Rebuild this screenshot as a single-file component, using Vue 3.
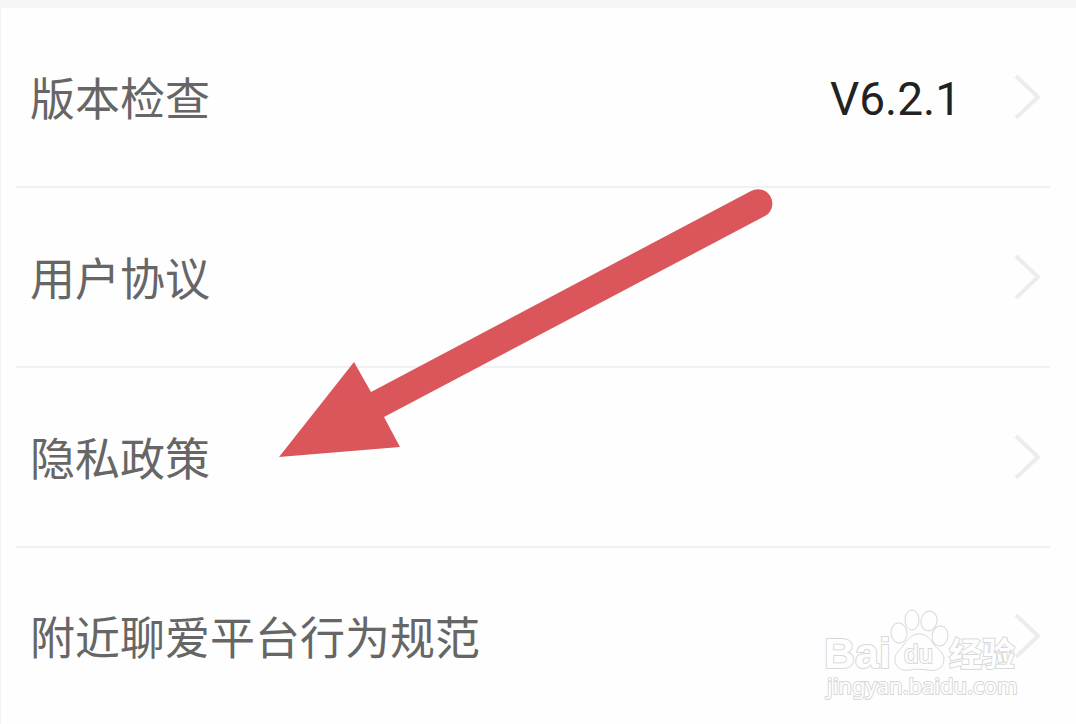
<script setup>
const rows = [
  { label: '版本检查', value: 'V6.2.1' },
  { label: '用户协议' },
  { label: '隐私政策' },
  { label: '附近聊爱平台行为规范' },
]
</script>

<template>
  <main class="page">
    <nav class="list">
      <a v-for="row in rows" :key="row.label" class="row" href="#">
        <span class="label">{{ row.label }}</span>
        <span v-if="row.value" class="value">{{ row.value }}</span>
        <svg class="chevron" viewBox="0 0 28 48" aria-hidden="true">
          <path d="M3 3 L25 24 L3 45" />
        </svg>
      </a>
    </nav>

    <svg class="arrow" viewBox="0 0 496 270" aria-hidden="true">
      <path d="M0 269 L75 174 L92 204 L472 3 A14 14 0 0 1 486 28 L105 229 L121 259 Z" />
    </svg>

    <svg class="watermark" viewBox="0 0 200 96" role="img" aria-label="Baidu 经验">
      <g class="paw">
        <ellipse cx="75" cy="24" rx="8" ry="10" transform="rotate(-8 75 24)" />
        <ellipse cx="88" cy="11" rx="7" ry="10" />
        <ellipse cx="105" cy="12" rx="8" ry="10" transform="rotate(12 105 12)" />
        <ellipse cx="116" cy="27" rx="8" ry="10" transform="rotate(8 116 27)" />
        <path d="M95 25 C87 25 83 31 79 37 C75 42 70 45 71 52 C72 60 79 62 86 61 C92 60 97 60 103 61 C112 63 120 59 120 50 C120 44 115 41 111 37 C106 30 103 25 95 25 Z" />
      </g>
      <text class="brand" x="0" y="59">Bai</text>
      <text class="du" x="80" y="54">du</text>
      <text class="cjk" x="125" y="57">经验</text>
      <text class="url" x="3" y="85">jingyan.baidu.com</text>
    </svg>
  </main>
</template>

<style>
body {
  margin: 0;
  background: #fefefe;
}
</style>

<style scoped>
.page {
  position: relative;
  box-sizing: border-box;
  min-height: 100vh;
  overflow: hidden;
  border-top: 8px solid #f5f5f5;
  background: #fefefe;
  font-family: "Noto Sans CJK SC", sans-serif;
}

.page::before {
  content: "";
  position: absolute;
  top: 0;
  bottom: 0;
  left: 0;
  width: 1px;
  background: #f2f2f2;
}

.list {
  display: flex;
  flex-direction: column;
  margin: 0 26px 0 16px;
}

.row {
  display: flex;
  align-items: center;
  box-sizing: border-box;
  height: 180px;
  padding: 0 9px 0 14px;
  border-bottom: 2px solid #f1f1f1;
  color: #666;
  text-decoration: none;
}

.row:last-child {
  height: 176px;
  border-bottom: 0;
}

.label {
  flex: 1;
  font-size: 45px;
  line-height: 60px;
}

.value {
  margin-right: 52px;
  padding-top: 4px;
  color: #222;
  font-family: Roboto, sans-serif;
  font-size: 46px;
  line-height: 60px;
}

.chevron {
  width: 28px;
  height: 48px;
  fill: none;
  stroke: #ececec;
  stroke-width: 4;
}

.arrow {
  position: absolute;
  top: 180px;
  left: 279px;
  width: 496px;
  height: 270px;
  fill: #db565b;
}

.watermark {
  position: absolute;
  right: 52px;
  bottom: 19px;
  width: 200px;
  height: 96px;
  fill: #fefefe;
  stroke: #d8d8d8;
  stroke-width: 1;
}

.watermark text {
  paint-order: stroke;
  stroke-width: 2;
}

.brand {
  font-family: "Liberation Sans", sans-serif;
  font-size: 43px;
  font-weight: 700;
}

.du {
  font-family: "Liberation Sans", sans-serif;
  font-size: 26px;
}

.cjk {
  font-family: "Noto Sans CJK SC", sans-serif;
  font-size: 33px;
  font-weight: 700;
}

.url {
  font-family: "Noto Sans", sans-serif;
  font-size: 22px;
}
</style>
